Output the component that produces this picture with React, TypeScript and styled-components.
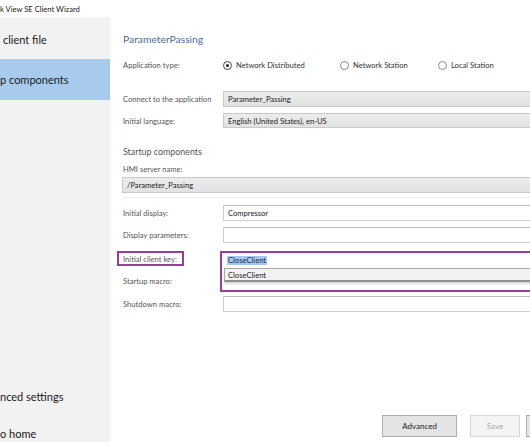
import styled, { createGlobalStyle } from 'styled-components'

const GlobalStyle = createGlobalStyle`
  html, body {
    margin: 0;
    padding: 0;
    width: 530px;
    height: 442px;
    overflow: hidden;
    background: #ffffff;
  }
  body {
    font-family: Lato, "Open Sans", sans-serif;
    color: #333;
  }
`

const SMALL = '7.6px'

const Window = styled.div`
  width: 615px;
  height: 442px;
  display: flex;
  flex-direction: column;
  background: #fff;
`

const TitleBar = styled.div`
  height: 17px;
  flex: none;
  display: flex;
  align-items: center;
  font-size: 7.6px;
  color: #222;
`

const Body = styled.div`
  flex: 1;
  display: flex;
  min-height: 0;
`

const Sidebar = styled.nav`
  width: 110px;
  flex: none;
  background: #f2f2f2;
  display: flex;
  flex-direction: column;
  padding-top: 2px;
  overflow: hidden;
`

const NavItem = styled.div<{ $active?: boolean; $indent?: number; $h?: number }>`
  height: ${({ $h }) => $h ?? 40}px;
  flex: none;
  display: flex;
  align-items: center;
  padding-left: ${({ $indent }) => $indent ?? 0}px;
  font-size: 11px;
  color: #1a1a1a;
  background: ${({ $active }) => ($active ? '#a8cbed' : 'transparent')};
  white-space: nowrap;
`

const Spacer = styled.div`
  flex: 1;
`

const BottomNav = styled.div`
  display: flex;
  flex-direction: column;
  margin-bottom: -10px;
`

const Main = styled.main`
  flex: 1;
  display: flex;
  flex-direction: column;
  padding: 14px 14px 5px 13px;
  min-width: 0;
`

const Heading = styled.div`
  font-size: 10.3px;
  line-height: 16px;
  color: #4b6d9e;
`

const Row = styled.div<{ $mt?: number }>`
  display: grid;
  grid-template-columns: 100px 1fr;
  align-items: center;
  margin-top: ${({ $mt }) => $mt ?? 0}px;
`

const Label = styled.div`
  font-size: ${SMALL};
  line-height: 12px;
  color: #555;
  white-space: nowrap;
`

const RadioGroup = styled.div`
  display: flex;
  height: 16px;
  align-items: center;
`

const RadioItem = styled.label<{ $w?: number }>`
  width: ${({ $w }) => ($w ? `${$w}px` : 'auto')};
  display: flex;
  align-items: center;
  gap: 4px;
  font-size: ${SMALL};
  color: #333;
`

const RadioCircle = styled.span<{ $checked?: boolean }>`
  width: 7px;
  height: 7px;
  border: 1px solid ${({ $checked }) => ($checked ? '#444' : '#888')};
  border-radius: 50%;
  display: flex;
  align-items: center;
  justify-content: center;
  &::after {
    content: '';
    width: 3px;
    height: 3px;
    border-radius: 50%;
    background: ${({ $checked }) => ($checked ? '#222' : 'transparent')};
  }
`

const Combo = styled.div<{ $h?: number }>`
  height: ${({ $h }) => $h ?? 16}px;
  box-sizing: border-box;
  border: 1px solid #c9c9c9;
  background: linear-gradient(#ececec, #e2e2e2);
  display: flex;
  align-items: center;
  padding-left: 4px;
  font-size: ${SMALL};
  color: #222;
`

const TextBox = styled.div<{ $h?: number }>`
  height: ${({ $h }) => $h ?? 16}px;
  box-sizing: border-box;
  border: 1px solid #cfcfcf;
  border-top-color: #bdbdbd;
  background: #fff;
  display: flex;
  align-items: center;
  padding-left: 4px;
  font-size: ${SMALL};
  color: #222;
`

const SectionTitle = styled.div`
  font-size: 8.9px;
  line-height: 14px;
  color: #555;
  margin-top: 17px;
`

const StackLabel = styled(Label)<{ $mt?: number }>`
  margin-top: ${({ $mt }) => $mt ?? 0}px;
`

const FullCombo = styled(Combo)`
  margin-top: 2px;
  margin-left: -1px;
`

const Separator = styled.div`
  height: 1px;
  background: #ececec;
  margin-top: 4px;
`

const KeyRow = styled.div`
  display: grid;
  grid-template-columns: 97px 1fr;
  margin-top: 8px;
`

const LabelColumn = styled.div`
  display: flex;
  flex-direction: column;
  align-items: flex-start;
`

const Highlight = styled.div`
  border: 2px solid #9a3d99;
  margin-left: -6px;
  height: 15px;
  box-sizing: border-box;
  display: flex;
  align-items: center;
  padding: 0 5px 0 4px;
  font-size: ${SMALL};
  color: #555;
  white-space: nowrap;
`

const KeyBox = styled.div`
  border: 2px solid #9a3d99;
  height: 41px;
  box-sizing: border-box;
  display: flex;
  flex-direction: column;
`

const KeyInput = styled.div`
  height: 15px;
  display: flex;
  align-items: center;
  padding-left: 5px;
  font-size: ${SMALL};
`

const Selected = styled.span`
  background: #a3c8ef;
  color: #1b2a48;
  padding: 0 1px;
  line-height: 9px;
`

const DropList = styled.div`
  height: 14px;
  box-sizing: border-box;
  margin-left: 2px;
  border: 1px solid #a9a9a9;
  border-bottom: 2px solid #8f8f8f;
  background: #f2f2f2;
  box-shadow: 0 2px 2px rgba(0, 0, 0, 0.15);
  display: flex;
  align-items: center;
  padding-left: 3px;
  font-size: ${SMALL};
  color: #222;
`

const ButtonBar = styled.div`
  margin-top: auto;
  display: flex;
  justify-content: flex-end;
  gap: 6px;
`

const Button = styled.button<{ $w: number; $disabled?: boolean; $mr?: number }>`
  width: ${({ $w }) => $w}px;
  height: 22px;
  box-sizing: border-box;
  margin-right: ${({ $mr }) => $mr ?? 0}px;
  border: 1px solid ${({ $disabled }) => ($disabled ? '#d6d6d6' : '#adadad')};
  background: ${({ $disabled }) => ($disabled ? '#f4f4f4' : '#e4e4e4')};
  color: ${({ $disabled }) => ($disabled ? '#a8a8a8' : '#222')};
  font-family: inherit;
  font-size: 8px;
  padding: 0;
`

export default function App() {
  return (
    <>
      <GlobalStyle />
      <Window>
        <TitleBar>k View SE Client Wizard</TitleBar>
        <Body>
          <Sidebar>
            <NavItem $indent={3}>client file</NavItem>
            <NavItem $active $h={41}>p components</NavItem>
            <Spacer />
            <BottomNav>
              <NavItem $h={37}>nced settings</NavItem>
              <NavItem $h={37}>o home</NavItem>
            </BottomNav>
          </Sidebar>
          <Main>
            <Heading>ParameterPassing</Heading>
            <Row $mt={10}>
              <Label>Application type:</Label>
              <RadioGroup>
                <RadioItem $w={117}>
                  <RadioCircle $checked />
                  Network Distributed
                </RadioItem>
                <RadioItem $w={98}>
                  <RadioCircle />
                  Network Station
                </RadioItem>
                <RadioItem>
                  <RadioCircle />
                  Local Station
                </RadioItem>
              </RadioGroup>
            </Row>
            <Row $mt={18}>
              <Label>Connect to the application</Label>
              <Combo>Parameter_Passing</Combo>
            </Row>
            <Row $mt={6}>
              <Label>Initial language:</Label>
              <Combo $h={15}>English (United States), en-US</Combo>
            </Row>
            <SectionTitle>Startup components</SectionTitle>
            <StackLabel $mt={4}>HMI server name:</StackLabel>
            <FullCombo>/Parameter_Passing</FullCombo>
            <Separator />
            <Row $mt={7}>
              <Label>Initial display:</Label>
              <TextBox>Compressor</TextBox>
            </Row>
            <Row $mt={6}>
              <Label>Display parameters:</Label>
              <TextBox>{''}</TextBox>
            </Row>
            <KeyRow>
              <LabelColumn>
                <Highlight>Initial client key:</Highlight>
                <StackLabel $mt={9}>Startup macro:</StackLabel>
              </LabelColumn>
              <KeyBox>
                <KeyInput>
                  <Selected>CloseClient</Selected>
                </KeyInput>
                <DropList>CloseClient</DropList>
              </KeyBox>
            </KeyRow>
            <Row $mt={4}>
              <Label>Shutdown macro:</Label>
              <TextBox>{''}</TextBox>
            </Row>
            <ButtonBar>
              <Button $w={75} $mr={7}>
                Advanced
              </Button>
              <Button $w={50} $disabled>
                Save
              </Button>
              <Button $w={75} aria-label="Finish" />
            </ButtonBar>
          </Main>
        </Body>
      </Window>
    </>
  )
}
